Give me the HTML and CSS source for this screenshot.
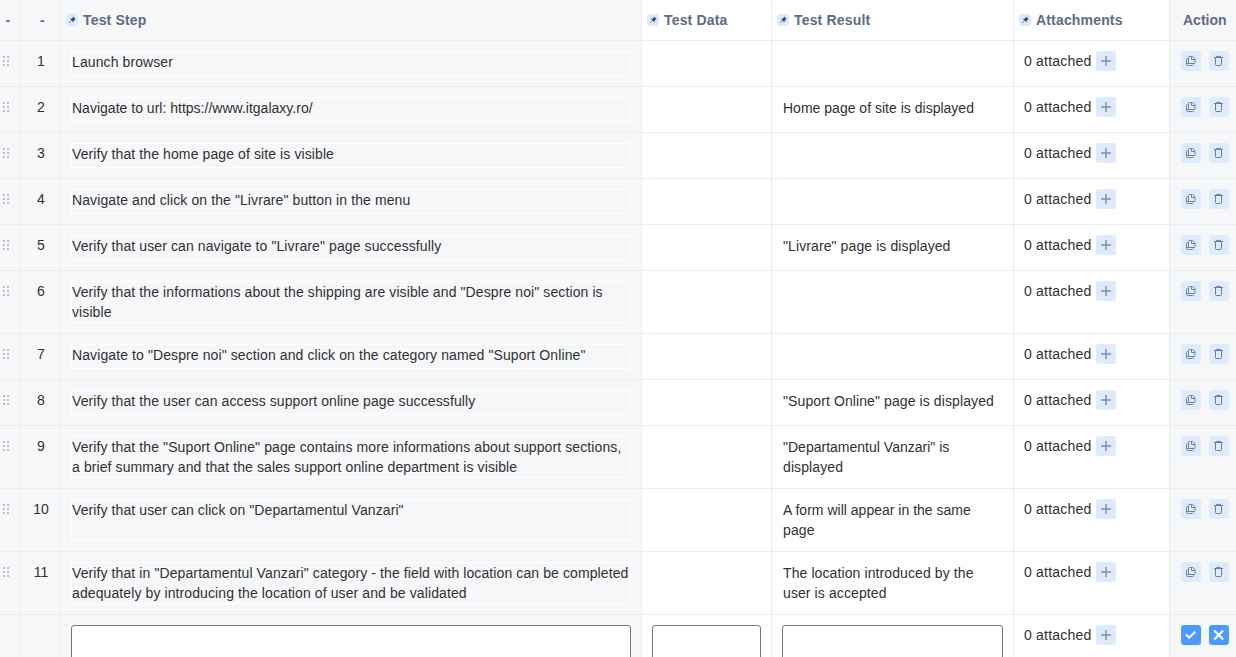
FILE: index.html
```html
<!DOCTYPE html>
<html lang="en">
<head>
<meta charset="utf-8">
<title>Test steps</title>
<link rel="stylesheet" href="styles.css">
</head>
<body>
<svg class="defs" aria-hidden="true">
<symbol id="pin" viewBox="0 0 12 12"><path d="M7 2.5 9.8 5.2 8.9 5.4 7.6 6.7 7.5 8.4 3.8 4.8 5.6 4.7 6.8 3.5Z" fill="#36496f"/><path d="M5.5 6.5 3 9" stroke="#667899" stroke-width=".9"/></symbol>
<symbol id="plus" viewBox="0 0 20 20"><path d="M10 5v10M5 10h10" stroke="#8090ac" stroke-width="1.5"/></symbol>
<symbol id="copy" viewBox="0 0 20 20"><g fill="none" stroke="#7183a4" stroke-width="1"><path d="M7.5 7.5h-1q-1 0-1 1v5q0 1 1 1h5q1 0 1-1"/><path d="M7.5 12.5v-6q0-1 1-1h3.2l2.3 2.2v4.1q0 .7-1 .7Z"/><path d="M10.5 5.5v3H14M5.5 12.5h5"/></g></symbol>
<symbol id="trash" viewBox="0 0 20 20"><path d="M5 6.5h9M7.5 6V5.4h4V6M6.5 7v6.5q0 1 1 1h4q1 0 1-1V7" fill="none" stroke="#6b7c9d"/></symbol>
<symbol id="check" viewBox="0 0 20 20"><path d="m5 9.5 3.2 3.2 6-6" fill="none" stroke="#fff" stroke-width="2"/></symbol>
<symbol id="cross" viewBox="0 0 20 20"><path d="m5.2 5.5 9 9m0-9-9 9" stroke="#fff" stroke-width="2.2"/></symbol>
<symbol id="grip" viewBox="0 0 6 10"><path d="M0 0h2v2H0zM4 0h2v2H4zM0 4h2v2H0zM4 4h2v2H4zM0 8h2v2H0zM4 8h2v2H4z" fill="#bcc0cc"/></symbol>
</svg>
<div class="table" id="steps">
<div class="row head">
<div class="shade dash">-</div><div class="shade dash">-</div>
<div class="shade title"><svg class="pin"><use href="#pin"/></svg><span>Test Step</span></div>
<div class="title"><svg class="pin"><use href="#pin"/></svg><span>Test Data</span></div>
<div class="title"><svg class="pin"><use href="#pin"/></svg><span>Test Result</span></div>
<div class="title"><svg class="pin"><use href="#pin"/></svg><span>Attachments</span></div>
<div class="shade action-title"><span>Action</span></div>
</div>
</div>
<script src="steps.js"></script>
</body>
</html>
```
FILE: steps.js
```js
const steps = [
  [['Launch browser'], []],
  [['Navigate to url: https://www.itgalaxy.ro/'], ['Home page of site is displayed']],
  [['Verify that the home page of site is visible'], []],
  [['Navigate and click on the "Livrare" button in the menu'], []],
  [['Verify that user can navigate to "Livrare" page successfully'], ['"Livrare" page is displayed']],
  [['Verify that the informations about the shipping are visible and "Despre noi" section is', 'visible'], []],
  [['Navigate to "Despre noi" section and click on the category named "Suport Online"'], []],
  [['Verify that the user can access support online page successfully'], ['"Suport Online" page is displayed']],
  [['Verify that the "Suport Online" page contains more informations about support sections,', 'a brief summary and that the sales support online department is visible'], ['"Departamentul Vanzari" is', 'displayed']],
  [['Verify that user can click on "Departamentul Vanzari"'], ['A form will appear in the same', 'page']],
  [['Verify that in "Departamentul Vanzari" category - the field with location can be completed', 'adequately by introducing the location of user and be validated'], ['The location introduced by the', 'user is accepted']]
];
const icon = (name, cls) => `<svg class="${cls}"><use href="#${name}"/></svg>`;
const tight = /https|^Home|^A form|^"Depart/;
const lines = list => list.map(t => `<span class="line${tight.test(t) ? ' tight' : ''}">${t}</span>`).join('');
const attached = `<div class="attach"><span>0 attached</span>${icon('plus', 'btn')}</div>`;
const rows = steps.map(([step, result], i) => `<div class="row">
  <div class="shade handle">${icon('grip', 'grip')}</div>
  <div class="shade num">${i + 1}</div>
  <div class="shade cell"><div class="box outlined">${lines(step)}</div></div>
  <div class="cell"></div>
  <div class="cell"><div class="box">${lines(result)}</div></div>
  ${attached}
  <div class="shade actions">${icon('copy', 'btn')}${icon('trash', 'btn')}</div>
</div>`);
rows.push(`<div class="row entry">
  <div class="shade"></div><div class="shade"></div>
  <div class="shade cell"><div class="input"></div></div>
  <div class="cell"><div class="input"></div></div>
  <div class="cell"><div class="input"></div></div>
  ${attached}
  <div class="shade actions">${icon('check', 'btn solid')}${icon('cross', 'btn solid')}</div>
</div>`);
document.getElementById('steps').insertAdjacentHTML('beforeend', rows.join(''));
```
FILE: styles.css
```css
* { box-sizing: border-box; }
body { margin: 0; background: #fff; color: #303134; font: 14px/20px "Liberation Sans", Arial, sans-serif; height: 657px; overflow: hidden; }
.defs { display: none; }
.row { display: grid; grid-template-columns: 21px 40px 581px 130px 242px 156px 1fr; min-height: 46px; }
.row > div { border-right: 1px solid #ebecef; border-bottom: 1px solid #ebecef; }
.row > div:last-child { border-right: 0; }
.row > .shade { background: #f5f7f9; }
.head { height: 41px; min-height: 0; color: #5e6c84; font-weight: bold; letter-spacing: .17px; }
.dash { display: flex; align-items: center; justify-content: center; padding-left: 4px; }
.dash:first-child { padding: 0 4px 0 0; }
.title { display: flex; align-items: center; gap: 5px; padding-left: 5px; }
.action-title { display: flex; align-items: center; padding-left: 13px; letter-spacing: 0; }
.pin { width: 12px; height: 12px; background: #deebff; border-radius: 2px; }
.handle { padding: 15px 0 0 3px; }
.grip { display: block; width: 6px; height: 10px; }
.num { padding: 10px 0 0 1px; text-align: center; }
.cell { padding: 10px; }
.box { min-height: 25px; height: 100%; border: 1px solid transparent; }
.outlined { border-color: #fff; }
.line { display: block; white-space: nowrap; letter-spacing: .1px; }
.tight { letter-spacing: .01px; }
.attach { display: flex; gap: 5px; padding: 10px; letter-spacing: .2px; }
.btn { width: 20px; height: 20px; border-radius: 3px; background: #deebff; }
.actions { display: flex; gap: 8px; padding: 10px 0 0 11px; }
.solid { background: #4c9aff; }
.entry { height: 43px; min-height: 0; overflow: hidden; }
.entry .cell { padding-bottom: 0; }
.input { height: 60px; border: 1px solid #76777a; border-radius: 3px; background: #fff; }
.entry > div { border-bottom: 0; }
```
